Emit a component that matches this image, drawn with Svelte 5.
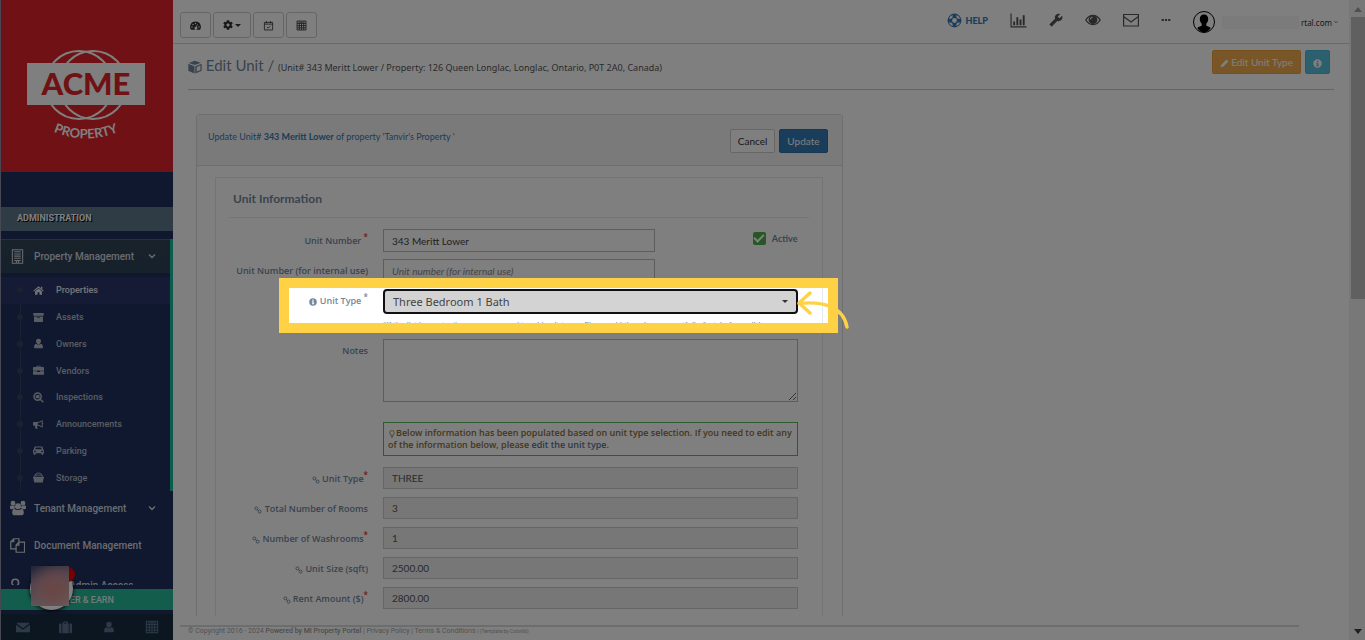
<script lang="ts">
  type Icon = { d?: string; s?: string; w?: number; box?: string };

  const icons: Record<string, Icon> = {
    dashboard: {
      d: 'M8 2a8 8 0 0 0-7 11.6c.2.3.4.4.7.4h12.6c.3 0 .5-.1.7-.4A8 8 0 0 0 8 2zM2.9 9.2a1 1 0 1 1 0 2 1 1 0 0 1 0-2zM4.4 5.5a1 1 0 1 1 0 2 1 1 0 0 1 0-2zM8 4a1 1 0 1 1 0 2 1 1 0 0 1 0-2zM13.1 9.2a1 1 0 1 1 0 2 1 1 0 0 1 0-2zM10.4 6l1 .3-1.6 4a2 2 0 1 1-1-.4z',
    },
    cog: {
      box: '0 0 512 512',
      d: 'M487.4 315.7l-42.6-24.6c4.3-23.2 4.3-47 0-70.2l42.6-24.6c4.9-2.8 7.1-8.6 5.5-14-11.1-35.6-30-67.8-54.7-94.6-3.8-4.1-10-5.1-14.8-2.3L380.8 110c-17.9-15.4-38.5-27.3-60.8-35.1V25.8c0-5.6-3.9-10.5-9.4-11.7-36.7-8.2-74.3-7.8-109.2 0-5.5 1.2-9.4 6.1-9.4 11.7V75c-22.2 7.9-42.8 19.8-60.8 35.1L88.7 85.5c-4.9-2.8-11-1.9-14.8 2.3-24.7 26.7-43.6 58.9-54.7 94.6-1.7 5.4.6 11.2 5.5 14L67.3 221c-4.3 23.2-4.3 47 0 70.2l-42.6 24.6c-4.9 2.8-7.1 8.6-5.5 14 11.1 35.6 30 67.8 54.7 94.6 3.8 4.1 10 5.1 14.8 2.3l42.6-24.6c17.9 15.4 38.5 27.3 60.8 35.1v49.2c0 5.6 3.9 10.5 9.4 11.7 36.7 8.2 74.3 7.8 109.2 0 5.5-1.2 9.4-6.1 9.4-11.7v-49.2c22.2-7.9 42.8-19.8 60.8-35.1l42.6 24.6c4.9 2.8 11 1.9 14.8-2.3 24.7-26.7 43.6-58.9 54.7-94.6 1.5-5.5-.7-11.3-5.6-14.1zM256 336c-44.1 0-80-35.9-80-80s35.9-80 80-80 80 35.9 80 80-35.9 80-80 80z',
    },
    calendar: { s: 'M2 3.5h12v11H2zM2 6h12M5 1.5v3M11 1.5v3M5.5 10l2 2 3.5-3.5', w: 1.2 },
    calculator: { s: 'M1.5 1.5h13v13h-13zM1.5 5h13M1.5 8.2h13M1.5 11.4h13M4.8 5v9.5M8 5v9.5M11.2 5v9.5M3.5 3.2h9', w: 1.2 },
    cube: { d: 'M7.7.8l6.9 2.4-6.7 2.6L.9 3.4zM.4 4.3l7 2.7v8.4L.8 12.6a.7.7 0 0 1-.4-.7zM15.6 4.2v7.7c0 .3-.1.5-.4.6l-6.9 2.9V7zM14.2 6.3L10 8v5.2l4.2-1.8z' },
    lifering: { s: 'M8 1.2a6.8 6.8 0 1 1 0 13.6A6.8 6.8 0 0 1 8 1.2zM8 4.8a3.2 3.2 0 1 1 0 6.4 3.2 3.2 0 0 1 0-6.4z', d: 'M6 1h4v4.3H6zM6 10.7h4V15H6zM1 6h4.3v4H1zM10.7 6H15v4h-4.3z', w: 1.1 },
    chart: { s: 'M1 1.5V14h14.5', d: 'M3 9h1.8v3.5H3zM6 5h1.8v7.5H6zM9 7h1.8v5.5H9zM12 3h1.8v9.5H12z', w: 1.1 },
    wrench: { box: '0 0 24 24', d: 'M1.3 19l9.1-9.1c-.9-2.3-.4-5 1.5-6.9 2-2 5-2.4 7.4-1.3L15 6l3 3 4.4-4.3c1.2 2.4.7 5.4-1.3 7.4-1.9 1.9-4.6 2.4-6.9 1.5l-9.1 9.1c-.4.4-1 .4-1.4 0l-2.3-2.3c-.5-.4-.5-1.1-.1-1.4z' },
    eye: { s: 'M.8 8C4.5 1.9 11.5 1.9 15.2 8 11.5 14.1 4.5 14.1.8 8z', d: 'M8 3.3a4.4 4.4 0 1 1 0 8.8 4.4 4.4 0 0 1 0-8.8zM7.8 4.7a2.8 2.8 0 0 0-2.7 2.8h.9A1.9 1.9 0 0 1 7.8 5.6z', w: 1.3 },
    envelope: { s: 'M.6 2.5h14.8V14H.6zM.6 4.5L8 10l7.4-5.5', w: 1.2 },
    mail: { d: 'M1 3h14v1.2L8 9.5 1 4.2zM0 5.5l8 5.7 8-5.7V14H0z' },
    dots: { d: 'M1 6.5h3.5v3H1zM6.3 6.5h3.4v3H6.3zM11.5 6.5H15v3h-3.5z' },
    pencil: { d: 'M11.5 1L15 4.5 6 13.5 1 15l1.5-5z' },
    info: { d: 'M8 .5a7.5 7.5 0 1 1 0 15 7.5 7.5 0 0 1 0-15zM6.8 3v2.5h2.6V3zM5.8 6.5V8h1v3h-1v1.7h4.6V11h-1V6.5z' },
    building: { s: 'M2.5.7h11v14.6h-11zM4.5 3h7M4.5 5.3h7M4.5 7.6h7M4.5 9.9h7M4.5 12.2h7M6.8 15v-2.5h2.4V15', w: 1.1 },
    chevron: { s: 'M2 5l6 6 6-6', w: 2.8 },
    home: { d: 'M8 1.8l7.5 6.7-1 1L8 4 1.5 9.5l-1-1zM8 5.2l5 4.3V14H9.5v-3.5h-3V14H3V9.5zM11.5 2.5h2v3.8l-2-1.8z' },
    archive: { d: 'M.5 1.5h15v4H.5zM1.5 6.5h13v8h-13zM6 7.5v1.3h4V7.5z' },
    user: { d: 'M8 1a3.6 3.6 0 0 1 3.6 3.8C11.6 7 10 9 8 9S4.4 7 4.4 4.8A3.6 3.6 0 0 1 8 1zM4.5 8.2c2 1.8 5 1.8 7 0 2 .6 3 2.6 3 5 0 1-.7 1.8-1.7 1.8H3.2c-1 0-1.7-.8-1.7-1.8 0-2.4 1-4.4 3-5z' },
    briefcase: { d: 'M5 3V1.8C5 1.2 5.4 1 6 1h4c.6 0 1 .2 1 .8V3h3.5c.8 0 1.5.5 1.5 1.3v4.2h-6V8H6v.5H0V4.3C0 3.5.7 3 1.5 3zM6.2 2.2V3h3.6v-.8zM0 9.2h6v1h4v-1h6V13c0 .8-.7 1.3-1.5 1.3h-13C.7 14.3 0 13.8 0 13z' },
    suitcase: { d: 'M5 3V1.5C5 1 5.5.7 6 .7h4c.6 0 1 .3 1 .8V3h1v12H4V3zM6.2 2v1h3.6V2zM3 3v12H1.5C.6 15 0 14.4 0 13.5v-9C0 3.6.6 3 1.5 3zM13 3h1.5c.9 0 1.5.6 1.5 1.5v9c0 .9-.6 1.5-1.5 1.5H13z' },
    search: { s: 'M6.7 1.5a5.2 5.2 0 1 1 0 10.4 5.2 5.2 0 0 1 0-10.4zM11 11l4 4', d: 'M4 4.500h5.500V9H4z', w: 2.2 },
    bullhorn: { d: 'M14 1v4.500c1.300.3 1.300 2.300 0 2.600V13C11.500 11 9 10 6.500 9.800c-.9.4-.9 1.300-.2 1.800-.5.700.1 1.300.9 1.900-.8 1.200-3 1.100-3.600.1-.4-1.300-1-2.500-.6-3.900H1.500C.7 9.700 0 9 0 8.300V5.700C0 4.900.7 4.300 1.500 4.300H6C8.500 4.300 11.500 3 14 1zM12.700 3.500c-1.900 1.200-4 1.900-5.700 2v2.900c1.900.1 3.800.8 5.700 2z' },
    car: { d: 'M3.500 2h9c.7 0 1.200.4 1.400 1L15 6.500c.6.300 1 .9 1 1.600V12h-1v1.200a1.400 1.400 0 0 1-2.800 0V12H3.800v1.200a1.400 1.400 0 0 1-2.800 0V12H0V8.100c0-.7.4-1.300 1-1.600L2.100 3c.2-.6.700-1 1.400-1zM4 3.600L3.200 6.300h9.600L12 3.600zM2.800 8a1.300 1.300 0 1 0 0 2.600 1.300 1.300 0 0 0 0-2.600zM13.200 8a1.300 1.300 0 1 0 0 2.600 1.300 1.300 0 0 0 0-2.600z' },
    basket: { d: 'M0 7h16v2h-.6l-1 5.500c-.1.500-.5.800-1 .8H2.600c-.5 0-.9-.3-1-.8L.6 9H0z', s: 'M2.500 7C2.700 3 5 1.500 8 1.500S13.300 3 13.500 7M2.500 4.500h11', w: 1.3 },
    group: { d: 'M8 3.200a3 3 0 1 1 0 6 3 3 0 0 1 0-6zM4.300 8.800c2 1.600 5.400 1.600 7.400 0 1.600.5 2.100 2.300 2.100 4.300 0 1.200-.8 2.200-1.800 2.200H4c-1 0-1.800-1-1.800-2.200 0-2 .5-3.800 2.100-4.300zM3 .8a2.400 2.400 0 1 1 0 4.800A2.400 2.400 0 0 1 3 .8zM13 .8a2.400 2.400 0 1 1 0 4.800 2.400 2.400 0 0 1 0-4.800zM.9 5.200c1 .7 2.600.8 3.600.4 0 1 .3 1.700.8 2.300-1 .2-1.800.6-2.300 1.300H1.300C.5 9.200 0 8.800 0 8c0-1 0-2.400.9-2.800zM15.100 5.200c.9.4.9 1.800.9 2.800 0 .8-.5 1.200-1.300 1.200H13c-.5-.7-1.300-1.100-2.300-1.300.5-.6.8-1.300.8-2.300 1 .4 2.600.3 3.600-.4z' },
    copy: { s: 'M9.500 4.500h6v10.700h-9V7.500zM9.500 4.500v3h-3M6.500 11.500H.8V4L4 .8h5.500v3.700M4 .8V4H.8', w: 1.3 },
    admin: { s: 'M6 1.500a3.800 3.800 0 1 1 0 7.600 3.800 3.800 0 0 1 0-7.600zM1 15c.5-3 2-4.500 5-4.500', d: 'M12 9a3 3 0 1 1 0 6 3 3 0 0 1 0-6z', w: 1.8 },
    link: { s: 'M4.800 1.800a3 3 0 1 1 0 6 3 3 0 0 1 0-6zM11.200 8.200a3 3 0 1 1 0 6 3 3 0 0 1 0-6zM6 6l4 4', w: 1.8 },
    bulb: { s: 'M5.500 10.500C5.500 9 3.500 8 3.500 5.500a4.500 4.500 0 0 1 9 0C12.500 8 10.500 9 10.500 10.500zM5.800 12.500h4.400M6.500 14.500h3', w: 1.5 },
  };

  const menu = [
    { icon: 'home', text: 'Properties' },
    { icon: 'archive', text: 'Assets' },
    { icon: 'user', text: 'Owners' },
    { icon: 'briefcase', text: 'Vendors' },
    { icon: 'search', text: 'Inspections' },
    { icon: 'bullhorn', text: 'Announcements' },
    { icon: 'car', text: 'Parking' },
    { icon: 'basket', text: 'Storage' },
  ];

  const linked = [
    { id: 'type-name', label: 'Unit Type', required: true, value: 'THREE' },
    { id: 'rooms', label: 'Total Number of Rooms', required: false, value: '3' },
    { id: 'washrooms', label: 'Number of Washrooms', required: true, value: '1' },
    { id: 'size', label: 'Unit Size (sqft)', required: false, value: '2500.00' },
    { id: 'rent', label: 'Rent Amount ($)', required: true, value: '2800.00' },
  ];

  let unitNumber = $state('343 Meritt Lower');
  let internalNumber = $state('');
  let active = $state(true);
  let notes = $state('');
</script>

{#snippet icon(name: string, size: number)}
  {@const i = icons[name]}
  <svg class="icon" width={size} height={size} viewBox={i.box ?? '0 0 16 16'} aria-hidden="true">
    {#if i.d}<path d={i.d} fill="currentColor" fill-rule="evenodd" />{/if}
    {#if i.s}<path d={i.s} fill="none" stroke="currentColor" stroke-width={i.w} />{/if}
  </svg>
{/snippet}

<div class="app">
  <aside class="sidebar">
    <a class="brand" href="#home" aria-label="Acme Property">
      <svg width="120" height="104" viewBox="0 0 120 104">
        <g fill="none" stroke="#fff" stroke-width="2">
          <circle cx="53" cy="42" r="34" />
          <circle cx="67" cy="42" r="34" />
        </g>
        <rect x="1" y="20" width="118" height="42" fill="#fff" />
        <text class="acme" x="60" y="52" text-anchor="middle">ACME</text>
        <path id="arc" d="M16 83Q60 108 104 83" fill="none" />
        <text class="property"><textPath href="#arc" startOffset="50%" text-anchor="middle">PROPERTY</textPath></text>
      </svg>
    </a>
    <div class="nav-scroll">
      <h3>ADMINISTRATION</h3>
      <nav>
        <div class="group open">
          <a class="parent" href="#property">
            <span class="picon">{@render icon('building', 15)}</span>
            <span class="ptext">Property Management</span>
            {@render icon('chevron', 8)}
          </a>
          <ul>
            {#each menu as item, n}
              <li class:current={n === 0}>
                <a href="#{item.text.toLowerCase()}">
                  <span class="micon">{@render icon(item.icon, 11)}</span>{item.text}
                </a>
              </li>
            {/each}
          </ul>
        </div>
        <a class="parent" href="#tenant">
          <span class="picon">{@render icon('group', 16)}</span>
          <span class="ptext">Tenant Management</span>
          {@render icon('chevron', 8)}
        </a>
        <a class="parent tall" href="#document">
          <span class="picon">{@render icon('copy', 15)}</span>
          <span class="ptext">Document Management</span>
        </a>
        <a class="parent tall" href="#admin">
          <span class="picon">{@render icon('admin', 14)}</span>
          <span class="ptext">Owner /Admin Access</span>
        </a>
      </nav>
    </div>
    <a class="refer" href="#refer">REFER &amp; EARN</a>
    <div class="side-footer">
      <a href="#mail" aria-label="Mail">{@render icon('mail', 14)}</a>
      <a href="#work" aria-label="Work orders">{@render icon('suitcase', 13)}</a>
      <a href="#profile" aria-label="Profile">{@render icon('user', 12)}</a>
      <a href="#calc" aria-label="Calculator">{@render icon('calculator', 14)}</a>
    </div>
    <div class="chat">
      <div class="badge"></div>
      <div class="face"></div>
    </div>
  </aside>

  <main>
    <header class="topbar">
      <div class="tools">
        <button aria-label="Dashboard">{@render icon('dashboard', 11)}</button>
        <button aria-label="Settings">{@render icon('cog', 10)}<span class="caret"></span></button>
        <button aria-label="Calendar">{@render icon('calendar', 11)}</button>
        <button aria-label="Calculator">{@render icon('calculator', 11)}</button>
      </div>
      <div class="links">
        <a class="help" href="#help">{@render icon('lifering', 15)}HELP</a>
        <a href="#reports" aria-label="Reports">{@render icon('chart', 17)}</a>
        <a href="#maintenance" aria-label="Maintenance">{@render icon('wrench', 14)}</a>
        <a href="#view" aria-label="View">{@render icon('eye', 16)}</a>
        <a href="#inbox" aria-label="Inbox">{@render icon('envelope', 16)}</a>
        <a href="#more" aria-label="More">{@render icon('dots', 10)}</a>
        <a class="account" href="#account">
          <svg width="22" height="22" viewBox="0 0 22 22" aria-hidden="true">
            <circle cx="11" cy="11" r="10.5" fill="#fff" stroke="#000" />
            <path d="M11 3.5c2.8 0 4.2 2 4.2 4.5 0 2-.8 3.6-1.9 4.7v2c1.700.6 3.500 1.200 4.400 2.200A10.500 10.500 0 0 1 11 21.500a10.500 10.500 0 0 1-6.700-4.600c.9-1 2.700-1.600 4.400-2.200v-2C7.600 11.600 6.800 10 6.800 8c0-2.500 1.400-4.500 4.200-4.500z" />
          </svg>
          <span class="mask"></span>
          <span>rtal.com</span>
          {@render icon('chevron', 4)}
        </a>
      </div>
    </header>

    <div class="content">
      <div class="title">
        <h1>{@render icon('cube', 14)} Edit Unit / <small>(Unit# 343 Meritt Lower / Property: 126 Queen Longlac, Longlac, Ontario, P0T 2A0, Canada)</small></h1>
        <div class="actions">
          <button class="warn">{@render icon('pencil', 9)} Edit Unit Type</button>
          <button class="info" aria-label="Info">{@render icon('info', 9)}</button>
        </div>
      </div>

      <div class="columns">
        <form class="panel" onsubmit={(e) => e.preventDefault()}>
          <div class="panel-head">
            <p>Update Unit# <b>343 Meritt Lower</b> of property 'Tanvir's Property '</p>
            <div class="actions">
              <button type="button" class="cancel">Cancel</button>
              <button class="update">Update</button>
            </div>
          </div>
          <fieldset>
            <h2>Unit Information</h2>
            <div class="row">
              <label for="number">Unit Number <sup>*</sup></label>
              <div class="split">
                <input id="number" type="text" bind:value={unitNumber} />
                <label class="active"><input type="checkbox" bind:checked={active} />Active</label>
              </div>
            </div>
            <div class="row">
              <label for="internal">Unit Number (for internal use)</label>
              <div class="split">
                <input id="internal" type="text" placeholder="Unit number (for internal use)" bind:value={internalNumber} />
              </div>
            </div>
            <div class="row type">
              <label for="unit-type">{@render icon('info', 8)} Unit Type <sup>*</sup></label>
              <div>
                <div class="select">
                  <select id="unit-type"><option>Three Bedroom 1 Bath</option></select>
                  <span class="caret"></span>
                </div>
                <p class="hint">*If the list is empty, then you may need to add unit types. Please add them in your portfolio first, before editing.</p>
              </div>
            </div>
            <div class="row notes">
              <label for="notes">Notes</label>
              <textarea id="notes" bind:value={notes}></textarea>
            </div>
            <div class="row alert-row">
              <span></span>
              <p class="alert">{@render icon('bulb', 8)}Below information has been populated based on unit type selection. If you need to edit any of the information below, please <a href="#unit-type">edit the unit type.</a></p>
            </div>
            {#each linked as field}
              <div class="row">
                <label for={field.id}>{@render icon('link', 8)} {field.label}{#if field.required}<sup>*</sup>{/if}</label>
                <input id={field.id} type="text" readonly value={field.value} />
              </div>
            {/each}
          </fieldset>
        </form>
      </div>
    </div>

    <footer>
      © Copyright 2016 - 2024 <b>Powered by MI Property Portal</b> | <a href="#privacy">Privacy Policy</a> | <a href="#terms">Terms &amp; Conditions</a> <small>| (Template by Colorlib)</small>
    </footer>
  </main>

  <div class="scrollbar">
    <span class="up"></span>
    <span class="thumb"></span>
    <span class="down"></span>
  </div>

  <!-- Everything outside the frame is dimmed by its shadow -->
  <div class="spotlight">
    <svg width="56" height="44" viewBox="0 0 56 44" aria-hidden="true">
      <path d="M13 5L2 15l11 10M2 15.5C25 13 46 18 50 39" fill="none" stroke="#ffd145" stroke-width="3.4" stroke-linecap="round" stroke-linejoin="round" />
    </svg>
  </div>
</div>

<style>
  :global(body) {
    margin: 0;
    background: #fff;
  }
  .app {
    position: relative;
    display: flex;
    height: 100vh;
    overflow: hidden;
    background: #fff;
    color: #73879c;
    font-family: Lato, sans-serif;
    font-size: 10px;
  }
  .app * {
    box-sizing: border-box;
  }
  a {
    color: inherit;
    text-decoration: none;
  }
  button, input, select, textarea {
    font: inherit;
  }
  h1, h2, h3, p, ul, fieldset {
    margin: 0;
    padding: 0;
  }
  .icon {
    flex-shrink: 0;
    vertical-align: middle;
  }
  .caret {
    border: 3px solid transparent;
    border-top-color: currentColor;
    border-bottom: 0;
  }

  .sidebar {
    position: relative;
    width: 173px;
    flex-shrink: 0;
    display: flex;
    flex-direction: column;
    background: #1f305e;
    border-left: 1px solid #8c93a8;
    font-family: Roboto, sans-serif;
    font-weight: 500;
    color: #d5d8e0;
  }
  .brand {
    height: 172px;
    flex-shrink: 0;
    display: flex;
    justify-content: center;
    padding: 43px 2px 0 0;
    background: #e0222a;
  }
  .acme {
    font: 900 31px Lato, sans-serif;
    fill: #e0222a;
  }
  .property {
    font: 700 13px Lato, sans-serif;
    fill: #fff;
  }
  .nav-scroll {
    flex: 1;
    min-height: 0;
    overflow: hidden;
    padding-top: 35px;
    margin-bottom: 4px;
  }
  h3 {
    height: 24px;
    padding-left: 16px;
    background: #5e768b;
    font-size: 9px;
    line-height: 22px;
    color: #fff;
    text-shadow: 1px 1px #000;
  }
  nav {
    padding-top: 8px;
  }
  .parent {
    display: flex;
    align-items: center;
    height: 34px;
    padding-right: 17px;
  }
  .parent.tall {
    height: 40px;
  }
  .group.open {
    border-right: 3px solid #1abb9c;
  }
  .open .parent {
    padding-right: 14px;
    background: linear-gradient(#334556, #2c4257);
    box-shadow: inset 0 1px #4b6075;
  }
  .picon {
    width: 33px;
    padding-left: 9px;
  }
  .ptext {
    flex: 1;
  }
  ul {
    position: relative;
    display: grid;
    grid-auto-rows: 1fr;
    height: 218px;
    padding-top: 4px;
    list-style: none;
  }
  ul::before {
    content: '';
    position: absolute;
    left: 19px;
    top: 4px;
    bottom: 0;
    border-left: 1px solid #33465f;
  }
  li {
    position: relative;
    display: flex;
    align-items: center;
    padding-left: 32px;
    color: #b4b9c6;
    font-size: 9px;
  }
  li::before {
    content: '';
    position: absolute;
    left: 16px;
    width: 6px;
    height: 6px;
    border-radius: 50%;
    background: #33465f;
  }
  li.current {
    background: #2a376a;
    color: #e8eaf0;
  }
  li a {
    display: flex;
    align-items: center;
  }
  .micon {
    width: 23px;
    display: flex;
  }
  .refer {
    height: 21px;
    flex-shrink: 0;
    padding-right: 6px;
    background: #27ba98;
    font-size: 9px;
    line-height: 23px;
    text-align: center;
    color: #e4f5f1;
  }
  .side-footer {
    height: 26px;
    flex-shrink: 0;
    display: grid;
    grid-template-columns: repeat(4, 1fr);
    place-items: center;
    margin-top: 4px;
    background: #172d40;
    color: #5a738e;
  }
  .chat {
    position: absolute;
    left: 29px;
    bottom: 30px;
    width: 43px;
    height: 43px;
    border-radius: 50%;
    background: #fff;
    box-shadow: 0 1px 4px #000;
  }
  .badge {
    position: absolute;
    right: -2px;
    top: 0;
    width: 15px;
    height: 15px;
    border-radius: 50%;
    background: #f00000;
  }
  .face {
    position: absolute;
    left: 1px;
    top: -1px;
    width: 38px;
    height: 40px;
    background:
      radial-gradient(circle at 60% 60%, #d68c88 0, rgba(214, 148, 146, 0.7) 40%, transparent 85%),
      linear-gradient(160deg, #434b72 0, #93829a 35%, #cdc8cc 100%);
  }

  main {
    flex: 1;
    min-width: 0;
    display: flex;
    flex-direction: column;
  }
  .topbar {
    height: 44px;
    flex-shrink: 0;
    display: flex;
    justify-content: space-between;
    padding: 12px 11px 0 7px;
    border-bottom: 1px solid #d0d3d8;
  }
  .tools {
    display: flex;
    gap: 2px;
  }
  .tools button {
    height: 26px;
    display: flex;
    align-items: center;
    gap: 2px;
    padding: 0 9px;
    border: 1px solid #ccc;
    border-radius: 3px;
    background: #fff;
    color: #333;
  }
  .links {
    display: flex;
    align-items: center;
    gap: 22px;
    height: 16px;
    color: #515356;
  }
  .links a {
    display: flex;
  }
  .links .help {
    align-items: center;
    gap: 3px;
    color: #337ab7;
    font-size: 9px;
    font-weight: 900;
  }
  .links .account {
    align-items: center;
    gap: 2px;
    padding-top: 4px;
    font-family: 'Noto Sans', sans-serif;
    font-size: 8px;
    color: #333;
  }
  .mask {
    width: 77px;
    height: 13px;
    margin-left: 5px;
    background: #f6f6f6;
  }

  .content {
    flex: 1;
    min-height: 0;
    overflow: hidden;
    padding: 0 15px;
  }
  .title {
    display: flex;
    justify-content: space-between;
    height: 46px;
    padding: 6px 4px 0 0;
    border-bottom: 1px solid #c4c8cc;
  }
  h1 {
    font-size: 15px;
    font-weight: 400;
    line-height: 30px;
    white-space: nowrap;
  }
  h1 small {
    font-family: 'Noto Sans', sans-serif;
    font-size: 9px;
    color: #555;
  }
  .actions {
    display: flex;
    gap: 4px;
  }
  .actions button {
    height: 24px;
    padding: 0 7px;
    border: 1px solid #ccc;
    border-radius: 2px;
    background: #fff;
    color: #333;
    white-space: nowrap;
  }
  .actions .warn {
    background: #f0ad4e;
    border-color: #eea236;
    color: #fff;
  }
  .actions .info {
    background: #5bc0de;
    border-color: #46b8da;
    color: #fff;
  }
  .actions .update {
    background: #337ab7;
    border-color: #2e6da4;
    color: #fff;
  }

  .columns {
    display: grid;
    grid-template-columns: 7fr 5fr;
    padding-top: 24px;
  }
  .panel {
    margin: 0 14px 0 8px;
    border: 1px solid #ddd;
    border-radius: 3px 3px 0 0;
  }
  .panel-head {
    display: flex;
    justify-content: space-between;
    height: 51px;
    padding: 14px 14px 0 11px;
    border-bottom: 1px solid #ddd;
    background: #f5f5f5;
    color: #337ab7;
    font-size: 9px;
    line-height: 15px;
  }
  .panel-head .actions {
    font-size: 10px;
  }
  fieldset {
    margin: 11px 19px 0 18px;
    padding: 13px 13px 20px;
    border: 1px solid #e6e9ed;
  }
  h2 {
    height: 27px;
    margin-bottom: 11px;
    padding-left: 4px;
    border-bottom: 1px solid #e6e9ed;
    font-size: 12px;
    line-height: 16px;
  }
  .row {
    display: grid;
    grid-template-columns: 139px 1fr;
    column-gap: 15px;
    min-height: 23px;
    margin-bottom: 7px;
    padding-right: 11px;
  }
  .row > label {
    padding-top: 6px;
    font-family: 'Open Sans', sans-serif;
    font-weight: 600;
    font-size: 9px;
    line-height: 12px;
    text-align: right;
    white-space: nowrap;
  }
  sup {
    font-size: 8px;
    line-height: 0;
    color: #e03030;
  }
  .type sup {
    color: #73879c;
  }
  .split {
    display: flex;
    justify-content: space-between;
  }
  input[type='text'] {
    width: 100%;
    height: 23px;
    padding: 0 8px;
    border: 1px solid #bbb;
    border-radius: 0;
    background: #fff;
    color: #444;
  }
  .split input[type='text'] {
    width: 272px;
  }
  input[type='text'][readonly] {
    height: 22px;
    background: #eee;
    border-color: #ccc;
    color: #555;
  }
  input::placeholder {
    font-style: italic;
    color: #888;
  }
  .active {
    display: flex;
    align-items: center;
    gap: 6px;
    height: 18px;
    font-size: 9px;
    font-weight: 700;
  }
  input[type='checkbox'] {
    appearance: none;
    display: grid;
    place-items: center;
    width: 13px;
    height: 13px;
    margin: 0;
    border-radius: 2px;
    background: #4fae4f;
  }
  input[type='checkbox']:checked::after {
    content: '';
    width: 8px;
    height: 4px;
    margin-bottom: 2px;
    border: solid #fff;
    border-width: 0 0 2px 2px;
    transform: rotate(-45deg);
  }
  .type {
    height: 43px;
  }
  .select {
    display: grid;
    align-items: center;
  }
  select {
    grid-area: 1 / 1;
    appearance: none;
    height: 25px;
    padding: 0 8px;
    border: 2px solid #101010;
    border-radius: 4px;
    background: #d3d3d3;
    color: #444;
    font-family: 'Noto Sans', sans-serif;
    font-size: 11px;
  }
  .select .caret {
    grid-area: 1 / 1;
    justify-self: end;
    margin-right: 10px;
    color: #333;
  }
  .hint {
    padding-top: 5px;
    font-size: 8px;
    line-height: 12px;
    white-space: nowrap;
  }
  .notes {
    margin-bottom: 20px;
  }
  textarea {
    height: 63px;
    border: 1px solid #bbb;
    border-radius: 0;
    background: #fff;
    resize: vertical;
  }
  .alert-row {
    margin-bottom: 11px;
  }
  .alert {
    padding: 4px;
    border: 1px solid #5cb85c;
    font-family: 'Open Sans', sans-serif;
    font-size: 9px;
    font-weight: 600;
    line-height: 12px;
    color: #8a6d3b;
  }
  .alert a {
    color: #5a738e;
  }

  footer {
    height: 15px;
    flex-shrink: 0;
    margin: 9px 50px 0 7px;
    padding-left: 8px;
    border-top: 2px solid #d9dadc;
    font-family: Roboto, sans-serif;
    font-size: 7px;
    line-height: 8px;
    color: #a5a5a5;
  }
  footer b {
    font-weight: 500;
    color: #999;
  }
  footer small {
    font-size: 5px;
  }

  .scrollbar {
    width: 16px;
    flex-shrink: 0;
    display: flex;
    flex-direction: column;
    align-items: center;
    padding-left: 2px;
    background: #f1f1f1;
  }
  .scrollbar .up {
    margin: 7px 0 5px;
    border: 4px solid transparent;
    border-top: 0;
    border-bottom: 5px solid #a0a0a0;
  }
  .scrollbar .thumb {
    width: 100%;
    flex: 0 0 44%;
    background: #c1c1c1;
  }
  .scrollbar .down {
    margin: auto 0 6px;
    border: 4px solid transparent;
    border-bottom: 0;
    border-top: 5px solid #404040;
  }

  .spotlight {
    position: absolute;
    left: 279px;
    top: 278px;
    width: 559px;
    height: 55px;
    border: 10px solid #ffd145;
    box-shadow: 0 0 0 9999px rgba(0, 0, 0, 0.5);
    pointer-events: none;
  }
  .spotlight svg {
    position: absolute;
    right: -25px;
    top: 0;
  }
</style>
